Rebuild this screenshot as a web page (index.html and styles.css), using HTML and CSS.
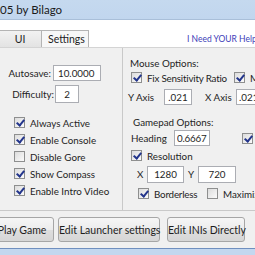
FILE: index.html
```html
<!DOCTYPE html>
<html lang="en">
<head>
    <meta name="viewport" content="width=device-width, initial-scale=1">
    <title>Launcher by Bilago</title>
    <link rel="stylesheet" href="styles.css">
</head>
<body>

<div class="window">
    <div class="titlebar">05 by Bilago</div>

    <div class="tabstrip">
        <div class="tabs">
            <div class="tab">UI</div>
            <div class="tab active">Settings</div>
        </div>
        <a class="help-link" href="#">I Need YOUR Help</a>
    </div>

    <div class="tabpanel">
        <div class="col-left">
            <div class="field autosave">
                <label>Autosave:</label>
                <input type="text" class="box w47" value="10.0000">
            </div>
            <div class="field difficulty">
                <label>Difficulty:</label>
                <input type="text" class="box w23 center" value="2">
            </div>

            <div class="checks">
                <label class="chk"><span class="cb on"></span>Always Active</label>
                <label class="chk"><span class="cb on"></span>Enable Console</label>
                <label class="chk"><span class="cb"></span>Disable Gore</label>
                <label class="chk"><span class="cb on"></span>Show Compass</label>
                <label class="chk"><span class="cb on"></span>Enable Intro Video</label>
            </div>
        </div>

        <div class="col-right">
            <div class="heading mouse">Mouse Options:</div>
            <div class="row r-fix">
                <label class="chk first tight"><span class="cb on"></span>Fix Sensitivity Ratio</label>
                <label class="chk"><span class="cb on"></span>Mouse Smoothing</label>
            </div>
            <div class="row r-axis">
                <span class="lbl">Y Axis</span>
                <input type="text" class="box w27 center" value=".021">
                <span class="lbl xaxis">X Axis</span>
                <input type="text" class="box w27" value=".021">
            </div>

            <div class="heading gamepad">Gamepad Options:</div>
            <div class="row r-heading">
                <span class="lbl">Heading</span>
                <input type="text" class="box w35" value="0.6667">
                <label class="chk"><span class="cb on"></span>Invert</label>
            </div>
            <div class="row r-res">
                <label class="chk"><span class="cb on"></span>Resolution</label>
            </div>
            <div class="row r-xy">
                <span class="lbl">X</span>
                <input type="text" class="box w36 center" value="1280">
                <span class="lbl ylbl">Y</span>
                <input type="text" class="box w37 center" value="720">
            </div>
            <div class="row r-border">
                <label class="chk first tight"><span class="cb on"></span>Borderless</label>
                <label class="chk"><span class="cb"></span>Maximized</label>
            </div>
        </div>
    </div>

    <div class="buttonbar">
        <button class="btn b-play">Play Game</button>
        <button class="btn b-edit">Edit Launcher settings</button>
        <button class="btn b-ini">Edit INIs Directly</button>
    </div>

    <div class="frame-bottom"></div>
</div>

</body>
</html>
```

FILE: styles.css
```css
        html, body {
            margin: 0;
            padding: 0;
            overflow: hidden;
            width: 255px;
            height: 255px;
        }

        body {
            font-family: Lato, "Open Sans", sans-serif;
            font-size: 9.8px;
            color: #1e1e1e;
        }

        .window {
            width: 320px;
            height: 255px;
            display: flex;
            flex-direction: column;
            background-color: #f0f0f0;
        }

        .titlebar {
            height: 19px;
            line-height: 19px;
            font-size: 11.5px;
            background: linear-gradient(#c5d9ef, #c1d6ee);
            border-bottom: 1px solid #a9bfd9;
            color: #1a1a1a;
        }

        .tabstrip {
            height: 27px;
            background-color: #ffffff;
            display: flex;
            align-items: flex-end;
            position: relative;
            border-bottom: 1px solid #d4d4d4;
        }

        .tabs {
            display: flex;
            margin-left: -2px;
        }

        .tab {
            height: 16px;
            line-height: 16px;
            padding: 0 10px;
            border: 1px solid #b4b4b4;
            border-bottom: none;
            background: linear-gradient(#f2f2f2, #e3e3e3);
            font-size: 10.5px;
        }

        .tab:first-child {
            width: 22px;
            text-align: center;
        }

        .tab + .tab {
            border-left: none;
            padding: 0 6px;
            width: 34px;
        }

        .tab.active {
            background: #f7f7f7;
        }

        .help-link {
            position: absolute;
            left: 187px;
            top: 14px;
            font-size: 8.5px;
            color: #4040b8;
            text-decoration: none;
            white-space: nowrap;
        }

        .tabpanel {
            height: 162px;
            display: flex;
            border-bottom: 1px solid #c9c9c9;
            background-color: #f0f0f0;
        }

        .col-left {
            width: 123px;
            flex: none;
            border-right: 1px solid #c9c9c9;
            padding-top: 17px;
            box-sizing: border-box;
        }

        .field {
            display: flex;
            align-items: center;
            margin-bottom: 4px;
        }

        .field label {
            text-align: right;
            box-sizing: border-box;
        }

        .autosave label {
            width: 53px;
            padding-right: 2px;
        }

        .difficulty label {
            width: 55px;
            padding-right: 1px;
        }

        .box {
            height: 16px;
            border: 1px solid #abadb3;
            background: #ffffff;
            font-family: inherit;
            font-size: 9.8px;
            color: #1e1e1e;
            padding: 0 2px;
            box-sizing: border-box;
            margin: 0;
        }

        .center {
            text-align: center;
        }

        .w47 { width: 48px; padding-left: 4px; }
        .w23 { width: 24px; height: 18px; }
        .w27 { width: 28px; }
        .w35 { width: 36px; padding: 0 1px 0 2px; letter-spacing: -0.2px; }
        .w36 { width: 37px; }
        .w37 { width: 38px; }

        .checks {
            margin-top: 13px;
            display: flex;
            flex-direction: column;
            gap: 4px;
            padding-left: 14px;
        }

        .chk {
            display: flex;
            align-items: center;
            height: 13px;
            white-space: nowrap;
        }

        .chk.tight {
            letter-spacing: -0.2px;
        }

        .cb {
            width: 9px;
            height: 9px;
            border: 1px solid #8e8f8f;
            background: linear-gradient(135deg, #dcdcdc, #fbfbfb);
            margin-right: 5px;
            flex: none;
            position: relative;
        }

        .cb.on::after {
            content: "";
            position: absolute;
            left: 3px;
            top: 0;
            width: 3px;
            height: 6px;
            border-right: 2px solid #23358c;
            border-bottom: 2px solid #23358c;
            transform: rotate(40deg);
        }

        .col-right {
            flex: none;
            width: 196px;
            padding-left: 7px;
            padding-top: 9px;
            box-sizing: border-box;
        }

        .heading {
            height: 12px;
            line-height: 12px;
        }

        .heading.gamepad {
            margin-left: 3px;
            margin-top: 11px;
        }

        .row {
            display: flex;
            align-items: center;
            white-space: nowrap;
        }

        .row .first {
            min-width: 0;
            overflow: visible;
        }

        .r-fix {
            margin-top: 2px;
            padding-left: 1px;
        }

        .r-fix .first {
            flex: 0 0 103px;
        }

        .r-axis {
            margin-top: 5px;
            margin-left: -2px;
        }

        .r-axis .lbl {
            width: 36px;
        }

        .r-axis .xaxis {
            width: 31px;
            margin-left: 13px;
        }

        .r-heading {
            margin-top: 2px;
            padding-left: 1px;
        }

        .r-heading .lbl {
            width: 43px;
        }

        .r-heading .chk {
            margin-left: 32px;
        }

        .r-res {
            margin-top: 3px;
            padding-left: 1px;
        }

        .r-xy {
            margin-top: 3px;
            padding-left: 7px;
            height: 18px;
        }

        .r-xy .box {
            height: 17px;
        }

        .r-xy .lbl {
            width: 10px;
        }

        .r-xy .ylbl {
            margin-left: 4px;
        }

        .r-border {
            margin-top: 4px;
            padding-left: 8px;
        }

        .r-border .first {
            flex: 0 0 69px;
        }

        .buttonbar {
            height: 37px;
            display: flex;
            align-items: center;
            gap: 4px;
            margin-left: -10px;
        }

        .btn {
            height: 25px;
            font-family: inherit;
            font-size: 10.5px;
            color: #1e1e1e;
            border: 1px solid #a6a6a6;
            border-radius: 3px;
            background: linear-gradient(#f6f6f6 0%, #ececec 50%, #dedede 51%, #d6d6d6 100%);
            padding: 0;
            white-space: nowrap;
            flex: none;
        }

        .b-play { width: 64px; }
        .b-edit { width: 102px; }
        .b-ini { width: 78px; margin-left: 3px; }

        .frame-bottom {
            flex: 1;
            border-top: 1px solid #6f8fbf;
            background: #c3d7ef;
        }
```
